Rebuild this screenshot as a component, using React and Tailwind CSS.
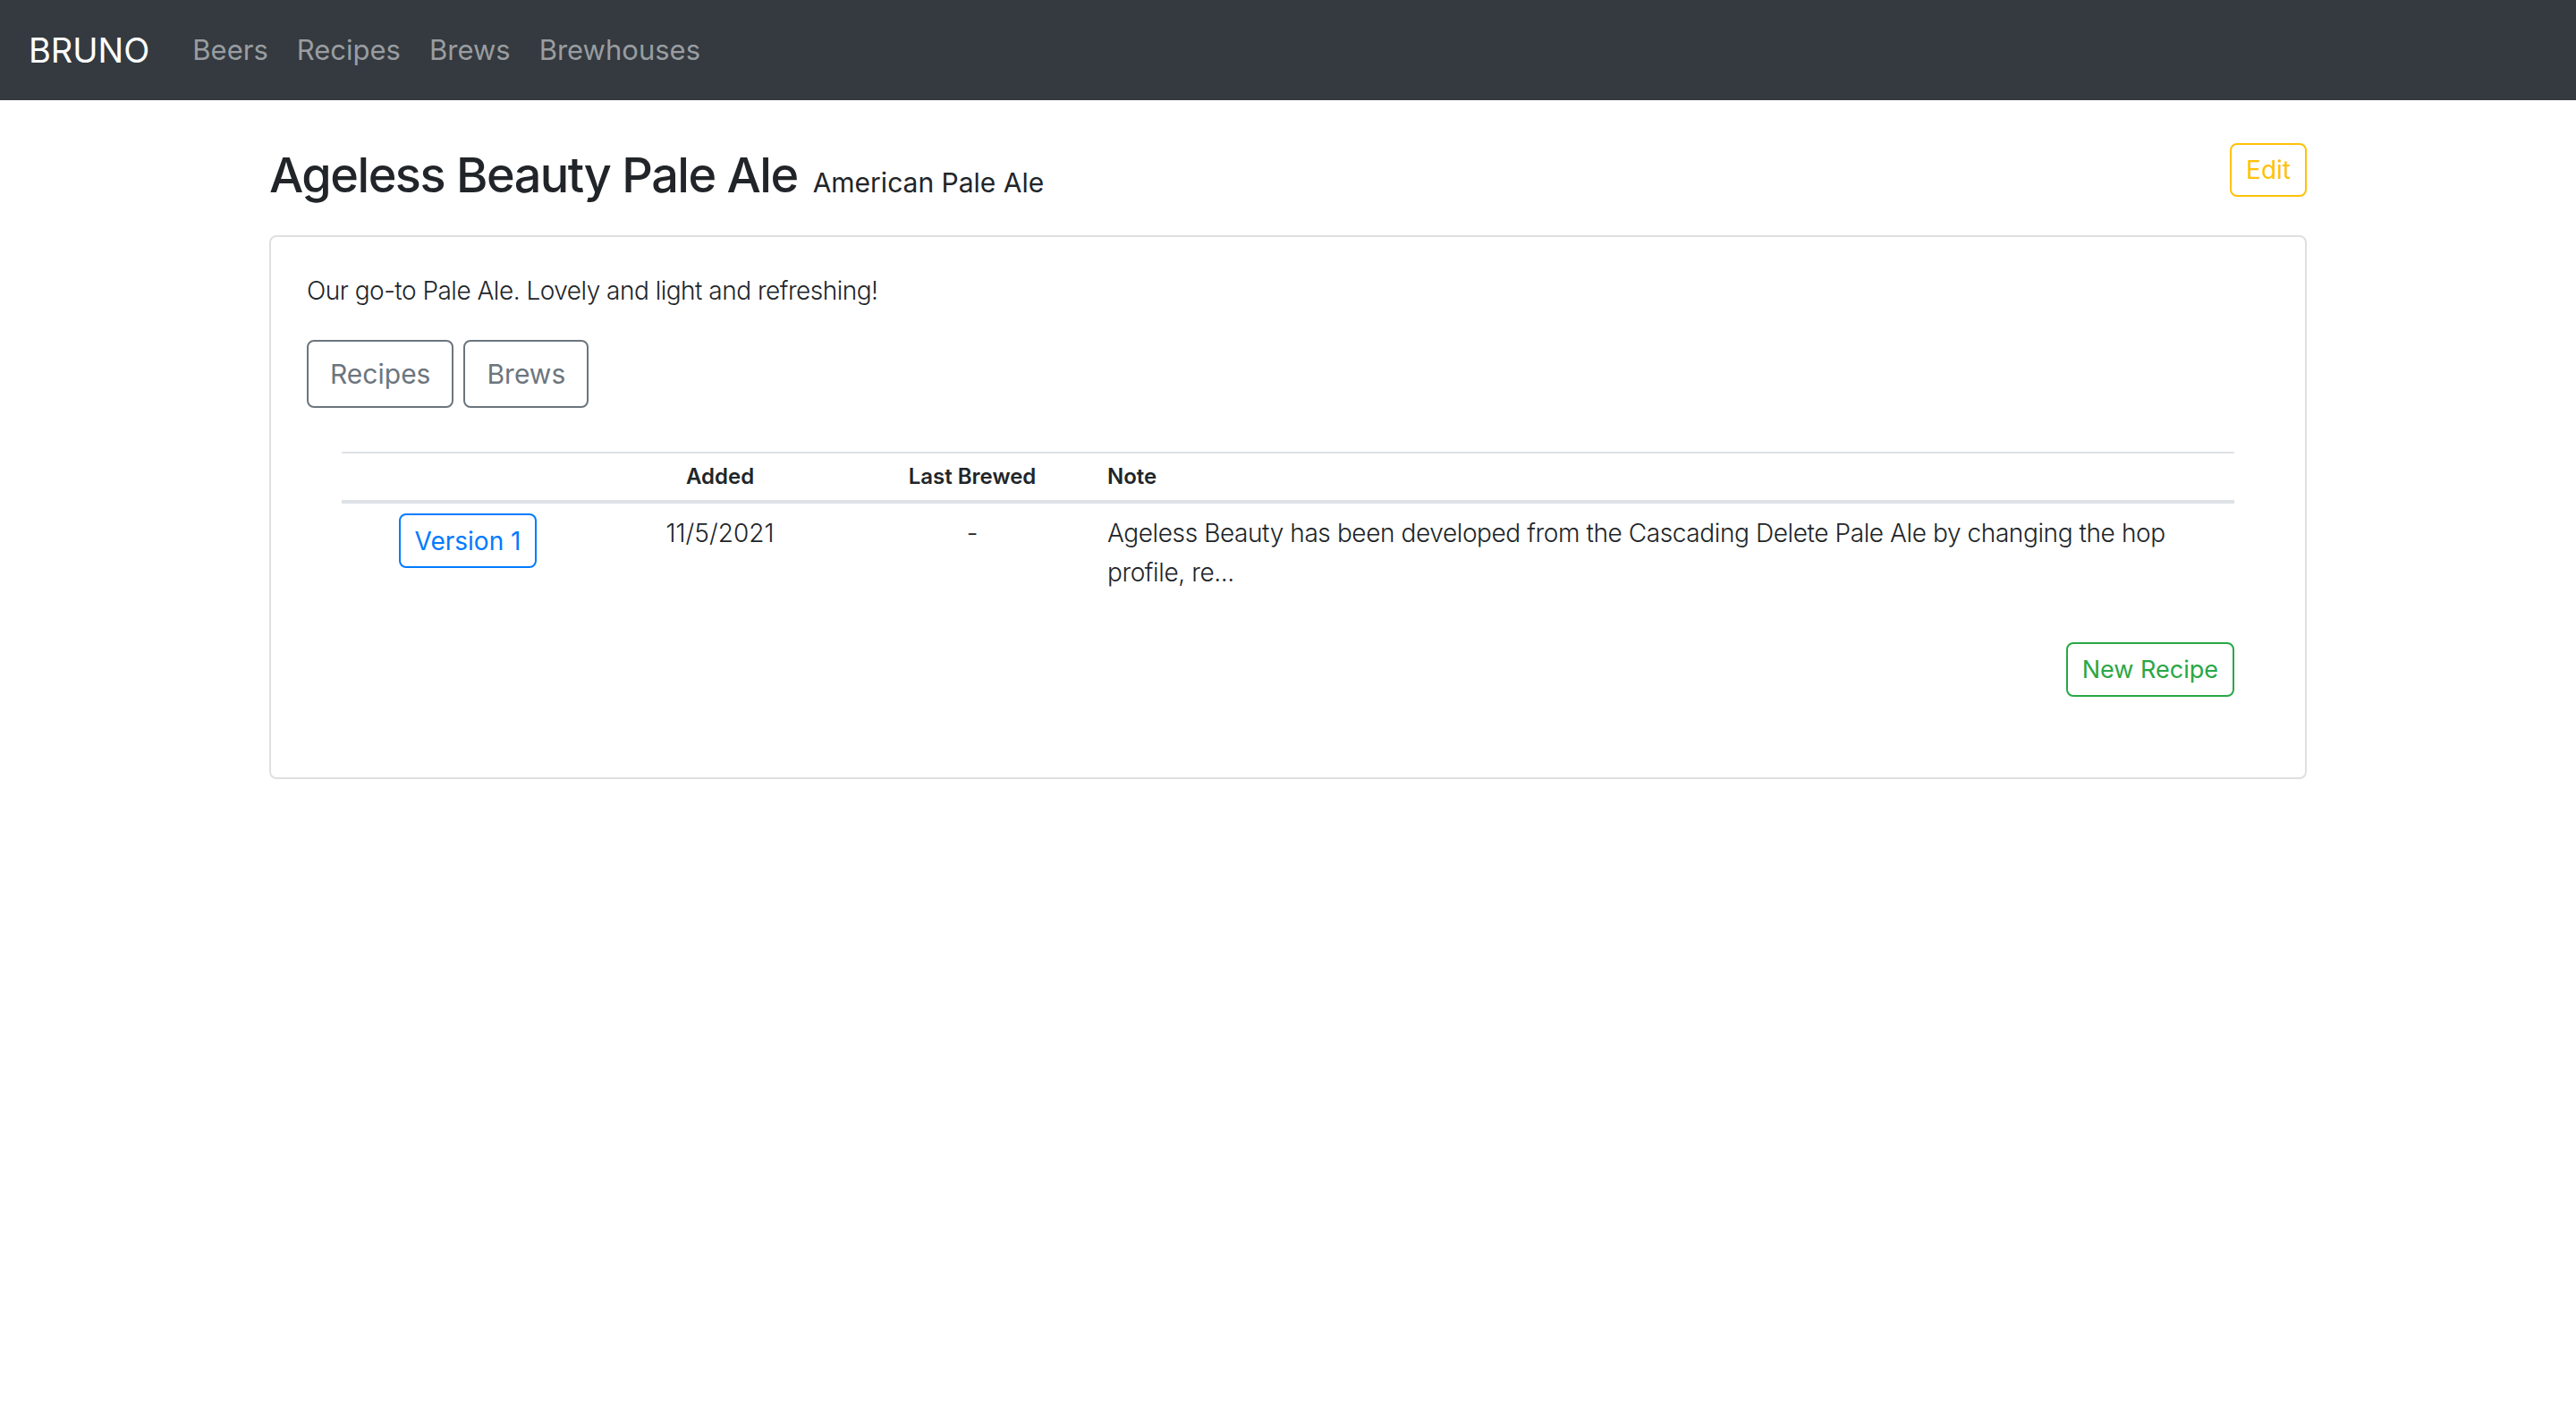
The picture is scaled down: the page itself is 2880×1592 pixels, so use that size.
import React from 'react'

const font = { fontFamily: 'Inter, "Noto Sans", sans-serif' }

function Navbar() {
    return (
        <nav className="h-[112px] bg-[#343a40] flex items-center px-[32px]">
            <a className="text-[38px] leading-[60px] text-white mr-[32px]">BRUNO</a>
            <div className="flex items-center">
                {['Beers', 'Recipes', 'Brews', 'Brewhouses'].map((l) => (
                    <a key={l} className="px-[16px] text-[31px] leading-[48px] text-[#9a9da0]">
                        {l}
                    </a>
                ))}
            </div>
        </nav>
    )
}

function RecipeTable() {
    return (
        <div className="mx-[39px]">
            <div className="flex border-t-2 border-b-4 border-[#dee2e6] h-[58px] items-center text-[24px] font-semibold text-[#212529]">
                <div className="w-[282px]"></div>
                <div className="w-[282px] text-center">Added</div>
                <div className="w-[282px] text-center">Last Brewed</div>
                <div className="flex-1 pl-[10px] pr-[24px]">Note</div>
            </div>
            <div className="flex pt-[11px] pb-[12px] text-[28px] leading-[44px] font-light text-[#212529]">
                <div className="w-[282px] flex justify-center">
                    <button className="h-[61px] px-[16px] border-2 border-[#007bff] rounded-[8px] text-[#007bff] text-[28px] font-normal leading-[42px]">
                        Version 1
                    </button>
                </div>
                <div className="w-[282px] text-center">11/5/2021</div>
                <div className="w-[282px] text-center">-</div>
                <div className="flex-1 pl-[10px] pr-[24px] tracking-[-0.4px]">
                    Ageless Beauty has been developed from the Cascading Delete Pale Ale by changing the hop profile, re...
                </div>
            </div>
            <div className="flex justify-end mt-[44px]">
                <button className="h-[61px] px-[16px] border-2 border-[#28a745] rounded-[8px] text-[#28a745] text-[27px] leading-[42px]">
                    New Recipe
                </button>
            </div>
        </div>
    )
}

export default function App() {
    return (
        <div className="min-h-screen bg-white" style={font}>
            <Navbar />
            <div className="w-[2278px] mx-auto">
                <div className="flex justify-between items-start mt-[48px]">
                    <h2 className="h-[72px] flex items-baseline gap-[17px] text-[#212529]">
                        <span className="text-[54px] leading-[72px] font-medium tracking-[-1.5px]">
                            Ageless Beauty Pale Ale
                        </span>
                        <small className="text-[30px] leading-none font-normal">American Pale Ale</small>
                    </h2>
                    <button className="h-[60px] px-[16px] border-2 border-[#ffc107] rounded-[8px] text-[#ffc107] text-[28px] leading-[42px]">
                        Edit
                    </button>
                </div>
                <div className="mt-[31px] border-2 border-[#dfdfdf] rounded-[8px] px-[40px] pt-[36px] pb-[90px]">
                    <p className="text-[28px] leading-[48px] font-light tracking-[-0.5px] text-[#212529]">
                        Our go-to Pale Ale. Lovely and light and refreshing!
                    </p>
                    <div className="flex gap-[11px] mt-[31px] mb-[49px]">
                        <button className="h-[76px] px-[24px] border-2 border-[#6c757d] rounded-[8px] text-[#6c757d] text-[30px]">
                            Recipes
                        </button>
                        <button className="h-[76px] px-[24px] border-2 border-[#6c757d] rounded-[8px] text-[#6c757d] text-[30px]">
                            Brews
                        </button>
                    </div>
                    <RecipeTable />
                </div>
            </div>
        </div>
    )
}
